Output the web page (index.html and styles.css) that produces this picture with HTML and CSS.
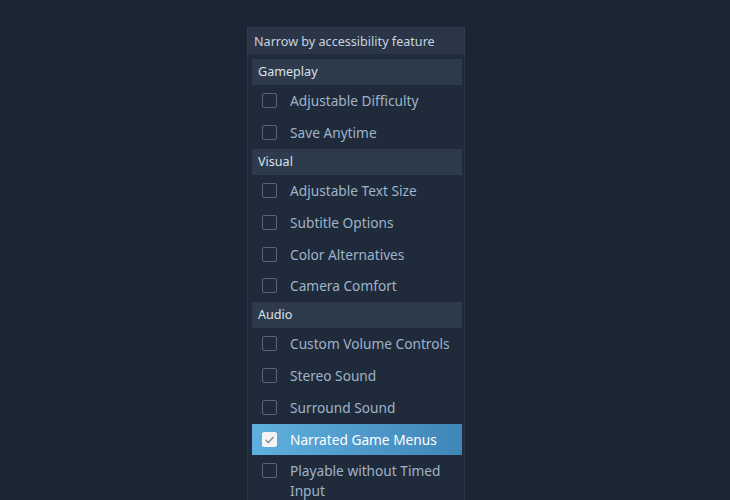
FILE: index.html
```html
<!DOCTYPE html>
<html>
<head>
<meta charset="utf-8">
<link rel="stylesheet" href="styles.css">
</head>
<body>
<div class="page">
  <div class="panel">
    <div class="title">Narrow by accessibility feature</div>
    <div class="body">
      <div class="section">Gameplay</div>
      <div class="row"><span class="box"></span><span class="label">Adjustable Difficulty</span></div>
      <div class="row"><span class="box"></span><span class="label">Save Anytime</span></div>
      <div class="section">Visual</div>
      <div class="row"><span class="box"></span><span class="label">Adjustable Text Size</span></div>
      <div class="row"><span class="box"></span><span class="label">Subtitle Options</span></div>
      <div class="row"><span class="box"></span><span class="label">Color Alternatives</span></div>
      <div class="row"><span class="box"></span><span class="label">Camera Comfort</span></div>
      <div class="section">Audio</div>
      <div class="row"><span class="box"></span><span class="label">Custom Volume Controls</span></div>
      <div class="row"><span class="box"></span><span class="label">Stereo Sound</span></div>
      <div class="row"><span class="box"></span><span class="label">Surround Sound</span></div>
      <div class="row checked"><span class="box"><svg viewBox="0 0 14 14" width="14" height="14"><path d="M3.2 7.2 L5.8 9.8 L10.8 4.2" fill="none" stroke="#8a929a" stroke-width="1.6" stroke-linecap="round" stroke-linejoin="round"/></svg></span><span class="label">Narrated Game Menus</span></div>
      <div class="row multi"><span class="box"></span><span class="label">Playable without Timed Input</span></div>
    </div>
  </div>
</div>
</body>
</html>
```

FILE: styles.css
```css
html, body {
  margin: 0;
  padding: 0;
  background: #1b2533;
  height: 100%;
  overflow: hidden;
}
.page {
  display: flex;
  padding-top: 27px;
  padding-left: 247px;
}
.panel {
  width: 218px;
  font-family: "Noto Sans", "Open Sans", sans-serif;
}
.title {
  background: #2a3647;
  color: #c6d4df;
  font-size: 12.6px;
  height: 27px;
  line-height: 27px;
  padding-left: 6px;
  border: 1px solid #2e3b4c;
  border-bottom: none;
  box-sizing: border-box;
}
.body {
  background: #1f2b3b;
  border-left: 1px solid #2b3949;
  border-right: 1px solid #2b3949;
  padding: 5px 2px 0 4px;
}
.section {
  background: #2e3b4c;
  color: #dbe2e8;
  font-size: 12.6px;
  height: 26px;
  line-height: 26px;
  padding-left: 6px;
}
.row {
  display: flex;
  align-items: center;
  height: 31.8px;
  padding-left: 10px;
  color: #9fb3c8;
  font-size: 13.7px;
}
.box {
  width: 15px;
  height: 15px;
  box-sizing: border-box;
  border: 1.5px solid #56657a;
  border-radius: 2px;
  flex: none;
  display: flex;
  align-items: center;
  justify-content: center;
}
.box svg {
  display: block;
}
.label {
  margin-left: 13px;
}
.row.checked {
  background: linear-gradient(to right, #5fb0df, #3f85b8);
  color: #ffffff;
  margin-top: 1px;
  height: 31px;
}
.row.checked .box {
  background: #f2f4f6;
  border-color: #f2f4f6;
}
.row.multi {
  align-items: flex-start;
  height: auto;
  padding-top: 6px;
  line-height: 20px;
}
.row.multi .box {
  margin-top: 2px;
}
.row.multi .label {
  width: 160px;
}
```
